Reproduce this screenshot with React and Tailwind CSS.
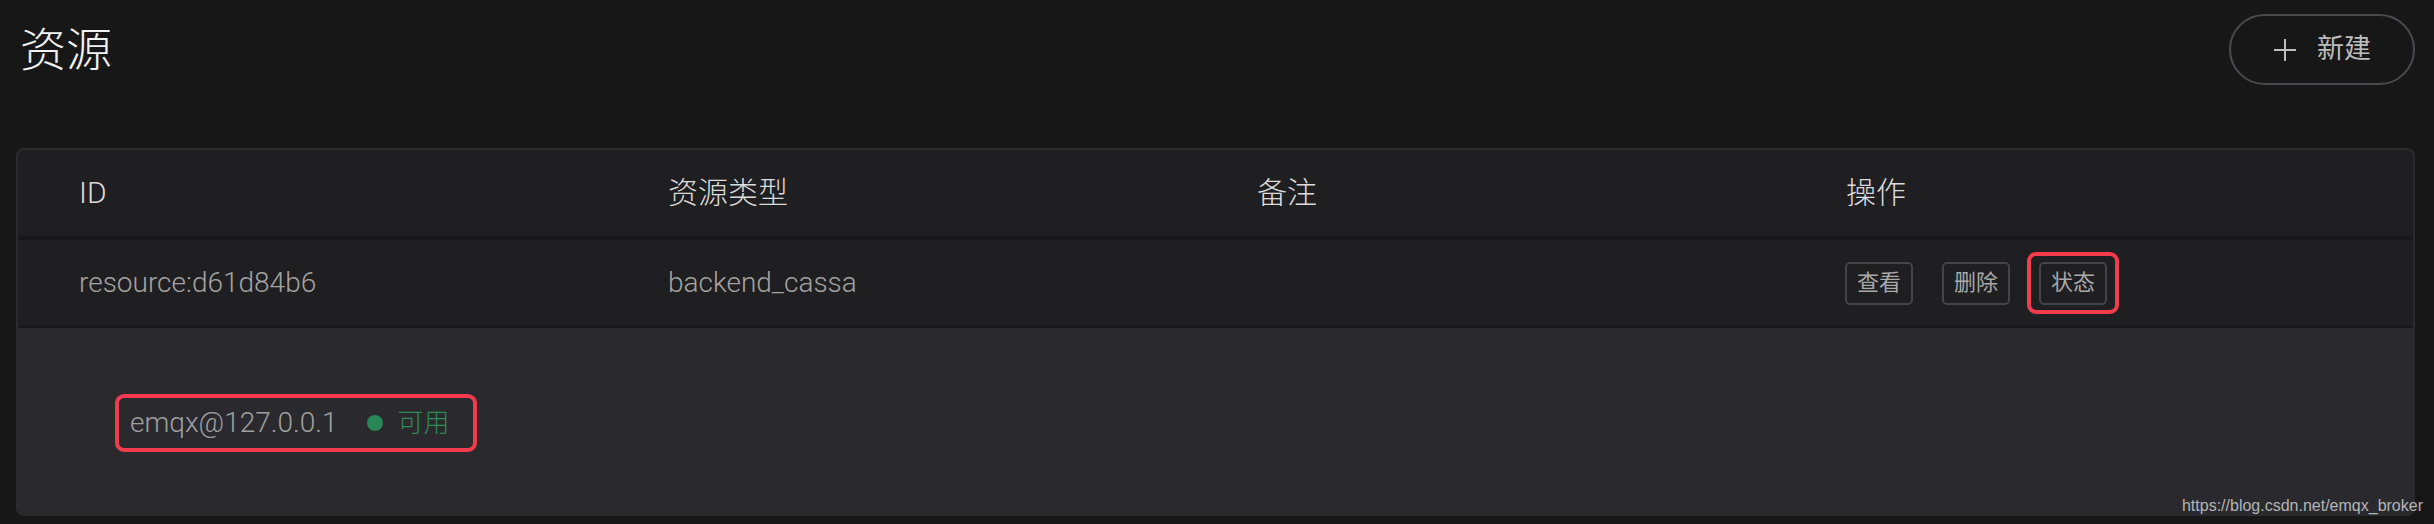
import React from 'react';

const font = { fontFamily: 'Roboto, "Noto Sans CJK SC", sans-serif' };

const columns = ['ID', '资源类型', '备注', '操作'];

const resource = {
  id: 'resource:d61d84b6',
  type: 'backend_cassa',
  note: '',
  node: 'emqx@127.0.0.1',
};

const PlusIcon = () => (
  <svg width="24" height="24" viewBox="0 0 24 24" fill="none" stroke="currentColor" strokeWidth="2">
    <path d="M12 1v22M1 12h22" />
  </svg>
);

const OpButton = ({ label, marked }) => (
  <div className="relative">
    {/* annotation frame from the screenshot */}
    {marked && (
      <div className="absolute -left-[12px] -right-[12px] -top-[10px] -bottom-[9px] border-4 border-[#f43b4c] rounded-[9px]" />
    )}
    <button className="relative w-[68px] h-[43px] flex items-center justify-center border-2 border-[#44444a] rounded-[5px] text-[22px] text-[#a9a9a9] leading-none">
      {label}
    </button>
  </div>
);

export default function App() {
  return (
    <div className="relative h-[524px] bg-[#171717] pt-[14px] overflow-hidden" style={font}>
      {/* page header */}
      <div className="flex justify-between items-start pl-[20px] pr-[19px] h-[71px]">
        <h1 className="mt-[13px] text-[46px] leading-none font-light text-[#f2f2f2]">资源</h1>
        <button className="h-[71px] w-[186px] flex items-center pl-[42px] gap-[20px] border-2 border-[#4a4a51] rounded-full text-[#bdbdbd]">
          <PlusIcon />
          <span className="text-[27px] leading-none">新建</span>
        </button>
      </div>

      {/* table card */}
      <div className="mt-[63px] ml-[16px] mr-[19px] border-2 border-[#2b2b2d] rounded-[8px] bg-[#1f1e20] overflow-hidden">
        <div className="grid grid-cols-[589px_589px_589px_1fr] h-[90px] items-center border-b-4 border-[#18181a]">
          {columns.map((c) => (
            <div key={c} className="pl-[61px] text-[30px] leading-none font-light text-[#dcdcdc]">
              {c}
            </div>
          ))}
        </div>

        <div className="grid grid-cols-[589px_589px_589px_1fr] h-[88px] items-center border-b-2 border-[#18181a]">
          <div className="pl-[61px] text-[28px] font-light text-[#a3a3a3]">{resource.id}</div>
          <div className="pl-[61px] text-[28px] font-light text-[#a3a3a3]">{resource.type}</div>
          <div className="pl-[61px] text-[28px] font-light text-[#a3a3a3]">{resource.note}</div>
          <div className="pl-[60px] flex items-center gap-[29px]">
            <OpButton label="查看" />
            <OpButton label="删除" />
            <OpButton label="状态" marked />
          </div>
        </div>

        {/* expanded status row */}
        <div className="h-[186px] bg-[#29292e] pt-[66px] pl-[97px]">
          <div className="inline-flex items-center h-[58px] border-4 border-[#f43b4c] rounded-[9px] pl-[11px] pr-[24px]">
            <span className="text-[28px] font-light text-[#a0a0a0]">{resource.node}</span>
            <span className="ml-[30px] w-[16px] h-[16px] rounded-full bg-[#2b8656]" />
            <span className="ml-[14px] text-[26px] font-light text-[#2f8b58]">可用</span>
          </div>
        </div>
      </div>

      {/* watermark */}
      <div
        className="absolute right-[11px] top-[494px] text-[16px] text-[#b5b5b5]"
        style={{ fontFamily: '"Liberation Sans", Arial, sans-serif' }}
      >
        https://blog.csdn.net/emqx_broker
      </div>
    </div>
  );
}
